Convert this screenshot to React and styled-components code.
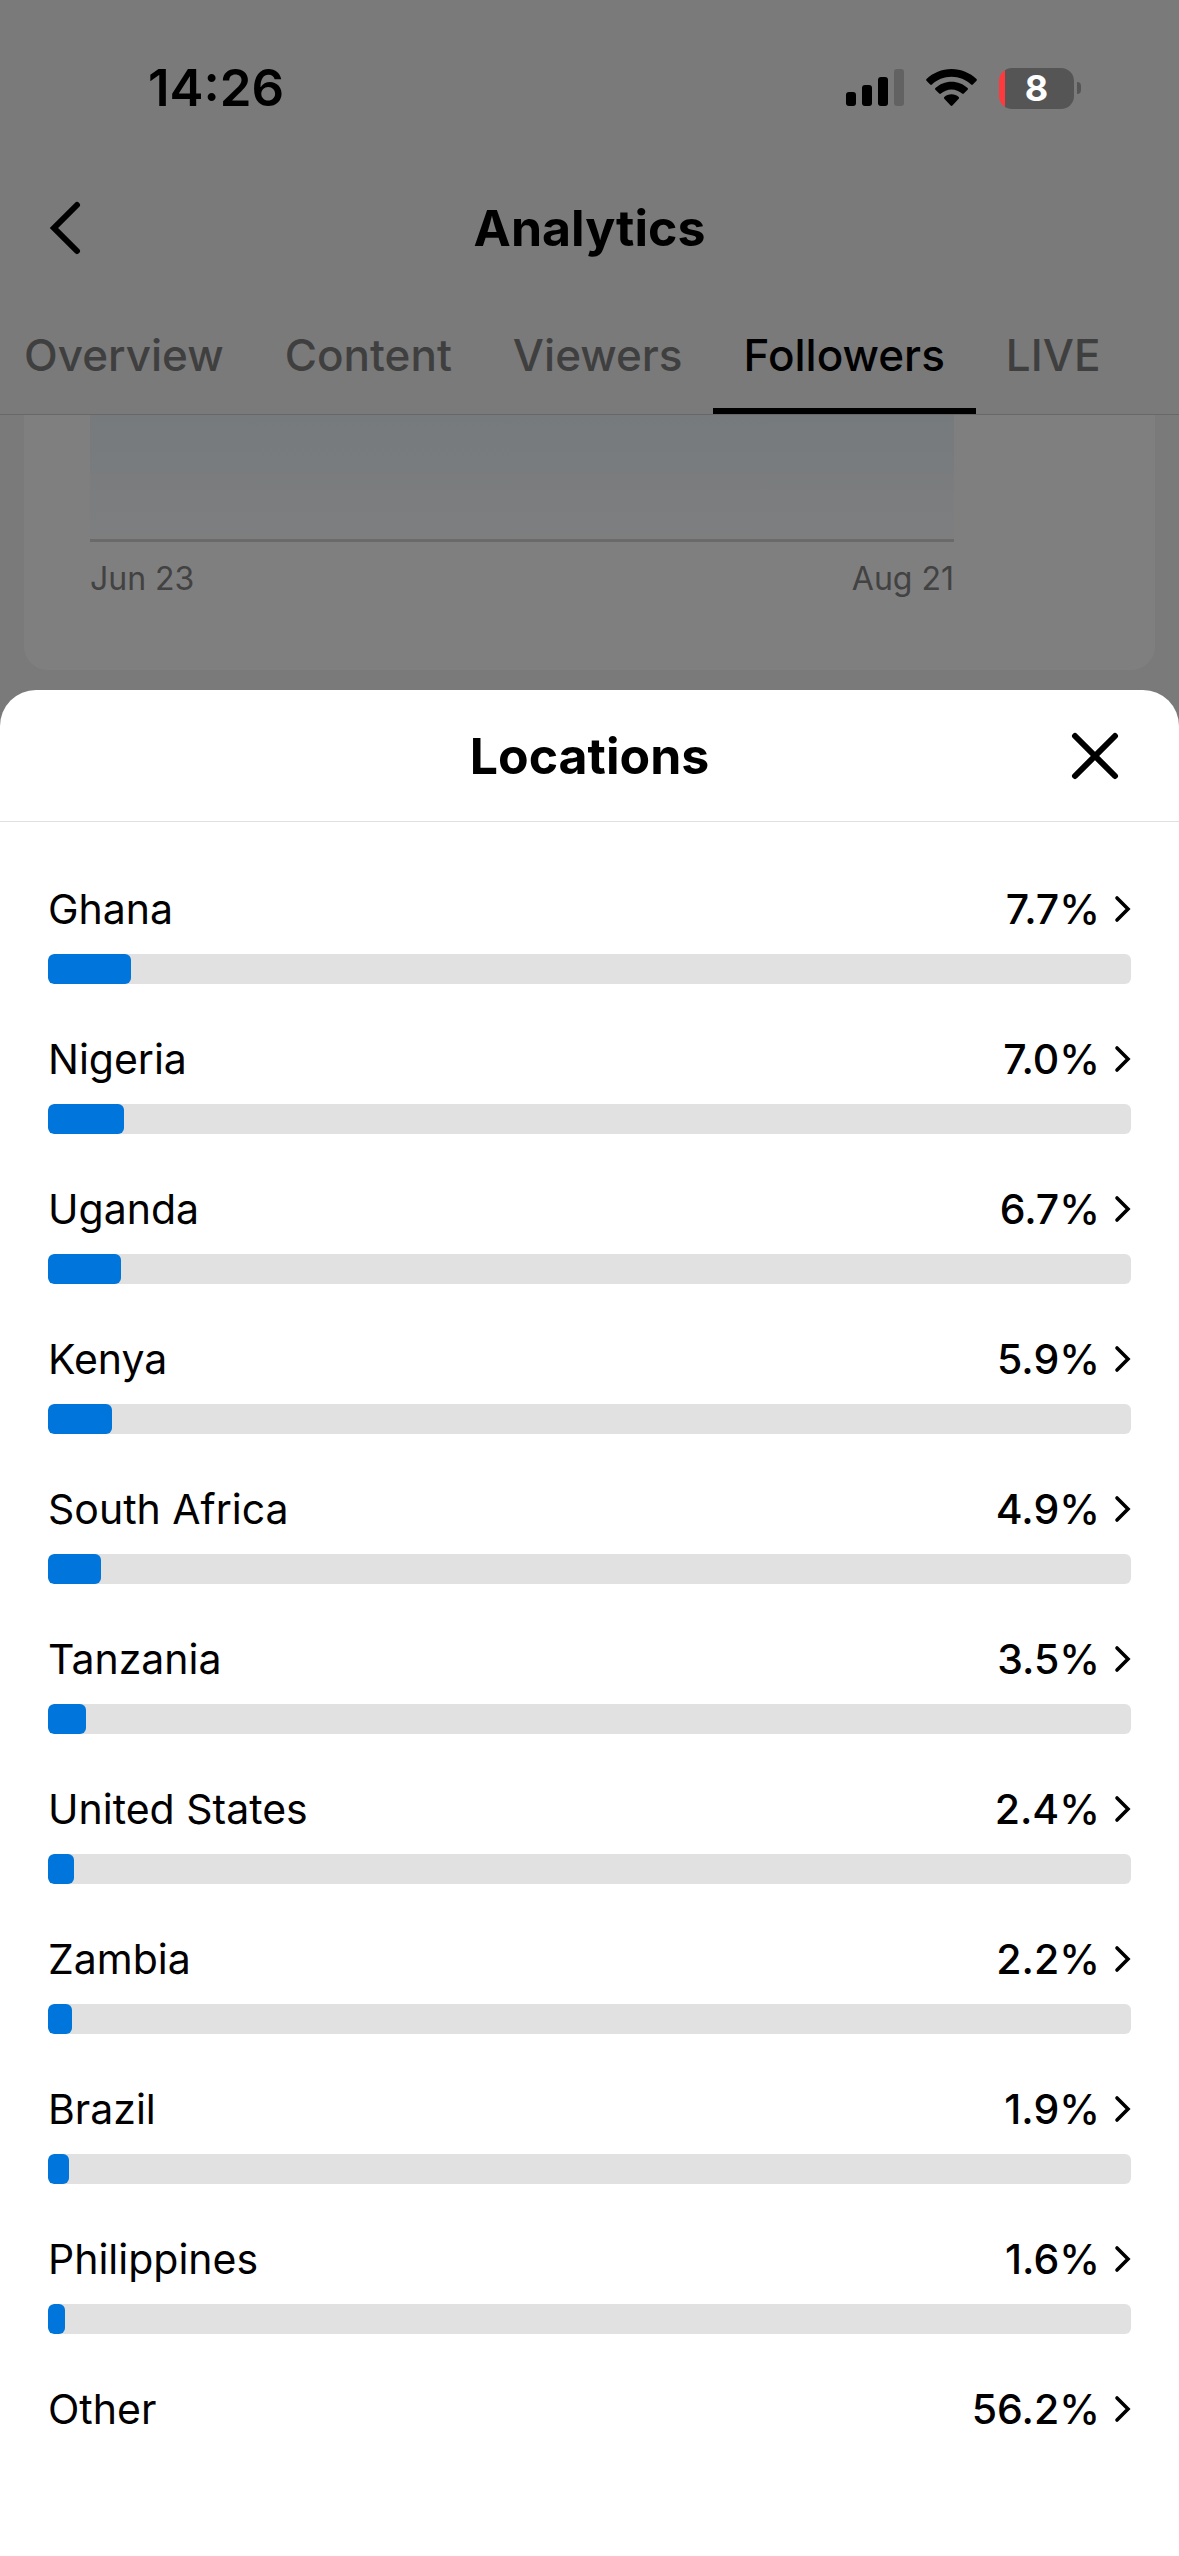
import React, { useState } from 'react';
import styled, { createGlobalStyle } from 'styled-components';

const GlobalStyle = createGlobalStyle`
  * {
    box-sizing: border-box;
  }
  body {
    margin: 0;
    background: #7a7a7a;
    font-family: Inter, 'Liberation Sans', sans-serif;
    color: #000;
  }
  button {
    padding: 0;
    border: none;
    background: none;
    font: inherit;
    color: inherit;
    cursor: pointer;
  }
  svg {
    display: block;
  }
`;

const Screen = styled.div`
  position: relative;
  display: flex;
  flex-direction: column;
  min-height: 100vh;
  background: #f5f5f5;
`;

// Dims everything behind the sheet
const Backdrop = styled.div`
  position: absolute;
  inset: 0;
  z-index: 1;
  background: rgba(0, 0, 0, 0.5);
`;

const StatusBar = styled.div`
  position: relative;
  z-index: 2;
  display: flex;
  justify-content: space-between;
  align-items: center;
  height: 176px;
  padding: 0 98px 0 148px;
`;

const Time = styled.span`
  font-size: 51px;
  line-height: 60px;
  font-weight: 600;
`;

const StatusIcons = styled.div`
  display: flex;
  align-items: center;
  gap: 22px;
`;

const BatteryWrap = styled.div`
  display: flex;
  align-items: center;
  gap: 3px;
`;

const Battery = styled.div`
  display: flex;
  align-items: center;
  justify-content: center;
  width: 75px;
  height: 41px;
  border-radius: 13px;
  background: linear-gradient(to right, #ff3a3c 6px, #555 6px);
  color: #fff;
  font-size: 36px;
  line-height: 41px;
  font-weight: 700;
`;

const BatteryTip = styled.div`
  width: 4px;
  height: 12px;
  border-radius: 0 4px 4px 0;
  background: #555;
`;

const NavBar = styled.header`
  display: grid;
  grid-template-columns: 1fr auto 1fr;
  align-items: center;
  height: 104px;
  padding: 0 48px;
`;

const IconButton = styled.button`
  justify-self: ${({ $end }) => ($end ? 'end' : 'start')};
  grid-column: ${({ $end }) => ($end ? 3 : 1)};
`;

const Title = styled.h1`
  grid-column: 2;
  margin: 0;
  font-size: 50px;
  line-height: 60px;
  font-weight: 700;
`;

const Tabs = styled.nav`
  display: flex;
  gap: 61px;
  height: 135px;
  padding: 0 24px;
  border-bottom: 1px solid #d0d0d0;
  overflow: hidden;
`;

const Tab = styled.button`
  position: relative;
  padding-top: 16px;
  font-size: 44px;
  line-height: 60px;
  font-weight: 500;
  color: ${({ $active }) => ($active ? '#000' : '#7f7f7f')};

  &::after {
    content: '';
    display: ${({ $active }) => ($active ? 'block' : 'none')};
    position: absolute;
    left: -31px;
    right: -31px;
    bottom: 0;
    height: 6px;
    background: #000;
  }
`;

const ChartCard = styled.section`
  margin: 0 24px 20px;
  padding: 0 201px 70px 66px;
  border-radius: 0 0 24px 24px;
  background: #fff;
`;

const ChartArea = styled.div`
  height: 127px;
  border-bottom: 3px solid #d4d4d4;
  background: linear-gradient(#ecf5fb, #fcfdfe);
`;

const ChartLabels = styled.div`
  display: flex;
  justify-content: space-between;
  padding-top: 16px;
  font-size: 32px;
  line-height: 42px;
  color: #848484;
`;

const Sheet = styled.section`
  position: relative;
  z-index: 2;
  flex: 1;
  border-radius: 36px 36px 0 0;
  background: #fff;
`;

const SheetHeader = styled.div`
  display: grid;
  grid-template-columns: 1fr auto 1fr;
  align-items: center;
  height: 132px;
  padding: 0 60px;
  border-bottom: 1px solid #e0e0e0;
`;

const SheetTitle = styled(Title).attrs({ as: 'h2' })``;

const LocationList = styled.ul`
  display: flex;
  flex-direction: column;
  gap: 45px;
  margin: 0;
  padding: 57px 48px 100px;
  list-style: none;
`;

const RowButton = styled.button`
  display: flex;
  justify-content: space-between;
  align-items: center;
  width: 100%;
  font-size: 41px;
  line-height: 60px;
`;

const Percent = styled.span`
  display: flex;
  align-items: center;
  gap: 14px;
  font-weight: 500;
`;

const Track = styled.div`
  height: 30px;
  margin-top: 15px;
  border-radius: 6px;
  background: #e1e1e1;
  overflow: hidden;
`;

const Fill = styled.div`
  height: 100%;
  border-radius: 6px;
  background: #0075dc;
`;

const tabs = ['Overview', 'Content', 'Viewers', 'Followers', 'LIVE'];

const locations = [
  { name: 'Ghana', value: 7.7 },
  { name: 'Nigeria', value: 7.0 },
  { name: 'Uganda', value: 6.7 },
  { name: 'Kenya', value: 5.9 },
  { name: 'South Africa', value: 4.9 },
  { name: 'Tanzania', value: 3.5 },
  { name: 'United States', value: 2.4 },
  { name: 'Zambia', value: 2.2 },
  { name: 'Brazil', value: 1.9 },
  { name: 'Philippines', value: 1.6 },
  { name: 'Other', value: 56.2, noBar: true },
];

const SignalIcon = () => (
  <svg width="58" height="38" viewBox="0 0 58 38">
    <rect x="0" y="23" width="10" height="14" rx="3" />
    <rect x="16" y="16" width="10" height="21" rx="3" />
    <rect x="32" y="8" width="10" height="29" rx="3" />
    <rect x="48" y="0" width="10" height="37" rx="3" fill="#626262" />
  </svg>
);

const WifiIcon = () => (
  <svg width="51" height="38" viewBox="0 0 51 38">
    <path d="M25.500 0C35.200 0 44 3.800 50.500 10.100C51 10.600 51 11.300 50.500 11.800L46.800 15.500C46.300 16 45.600 16 45.100 15.500C40 10.600 33 7.700 25.500 7.700C18 7.700 11 10.600 5.900 15.500C5.400 16 4.700 16 4.200 15.500L.5 11.800C0 11.300 0 10.600 .5 10.100C7 3.800 15.800 0 25.500 0Z" />
    <path d="M25.500 12.700C31.700 12.700 37.400 15.100 41.600 19.100C42.100 19.600 42.100 20.300 41.600 20.800L37.800 24.600C37.300 25.100 36.600 25.100 36.100 24.600C33.300 22 29.600 20.400 25.500 20.400C21.400 20.400 17.700 22 14.900 24.600C14.400 25.100 13.700 25.100 13.200 24.600L9.400 20.800C8.900 20.300 8.900 19.600 9.400 19.100C13.600 15.100 19.300 12.700 25.500 12.700Z" />
    <path d="M25.500 25.300C28.300 25.300 30.800 26.300 32.700 28.100C33.200 28.600 33.200 29.300 32.700 29.800L26.400 36.500C25.900 37 25.100 37 24.600 36.500L18.300 29.800C17.800 29.300 17.800 28.600 18.300 28.100C20.200 26.300 22.700 25.300 25.500 25.300Z" />
  </svg>
);

const BackIcon = () => (
  <svg width="36" height="54" viewBox="0 0 36 54" fill="none" stroke="#000" strokeWidth="6" strokeLinecap="round">
    <path d="M29 4L6 27L29 50" />
  </svg>
);

const CloseIcon = () => (
  <svg width="48" height="48" viewBox="0 0 48 48" fill="none" stroke="#000" strokeWidth="6" strokeLinecap="round">
    <path d="M4 4L44 44M44 4L4 44" />
  </svg>
);

const ChevronIcon = () => (
  <svg width="17" height="28" viewBox="0 0 17 28" fill="none" stroke="#000" strokeWidth="3.600" strokeLinecap="round">
    <path d="M3 3L14 14L3 25" />
  </svg>
);

const LocationRow = ({ name, value, noBar }) => (
  <li>
    <RowButton type="button">
      <span>{name}</span>
      <Percent>
        {value.toFixed(1)}%
        <ChevronIcon />
      </Percent>
    </RowButton>
    {!noBar && (
      <Track>
        <Fill style={{ width: `${value}%` }} />
      </Track>
    )}
  </li>
);

const App = () => {
  const [activeTab, setActiveTab] = useState('Followers');

  return (
    <Screen>
      <GlobalStyle />
      <Backdrop />
      <StatusBar>
        <Time>14:26</Time>
        <StatusIcons>
          <SignalIcon />
          <WifiIcon />
          <BatteryWrap>
            <Battery>8</Battery>
            <BatteryTip />
          </BatteryWrap>
        </StatusIcons>
      </StatusBar>
      <NavBar>
        <IconButton type="button" aria-label="Back">
          <BackIcon />
        </IconButton>
        <Title>Analytics</Title>
      </NavBar>
      <Tabs>
        {tabs.map(tab => (
          <Tab key={tab} type="button" $active={tab === activeTab} onClick={() => setActiveTab(tab)}>
            {tab}
          </Tab>
        ))}
      </Tabs>
      <ChartCard>
        <ChartArea />
        <ChartLabels>
          <span>Jun 23</span>
          <span>Aug 21</span>
        </ChartLabels>
      </ChartCard>
      <Sheet>
        <SheetHeader>
          <SheetTitle>Locations</SheetTitle>
          <IconButton type="button" aria-label="Close" $end>
            <CloseIcon />
          </IconButton>
        </SheetHeader>
        <LocationList>
          {locations.map(location => (
            <LocationRow key={location.name} {...location} />
          ))}
        </LocationList>
      </Sheet>
    </Screen>
  );
};

export default App;
